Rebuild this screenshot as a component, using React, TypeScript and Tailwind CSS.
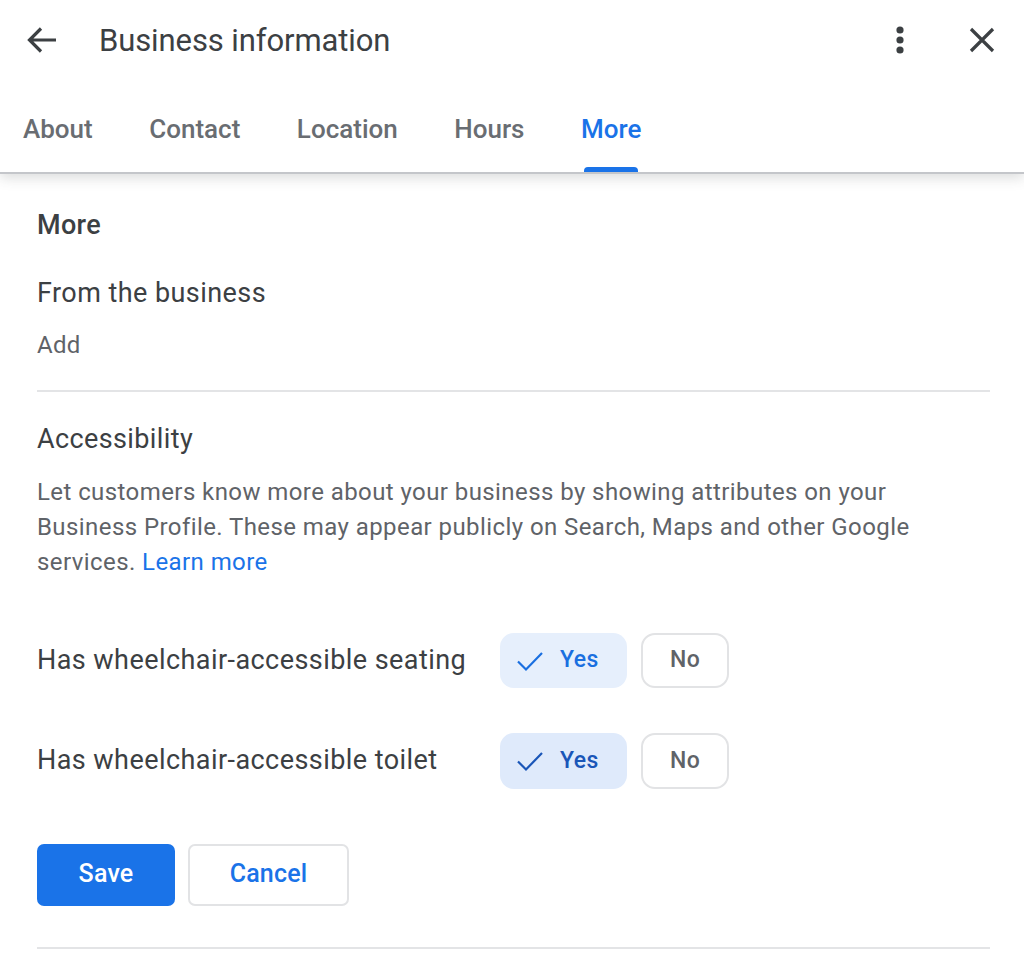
import React from "react";

const F = "font-['Roboto',sans-serif]";

function Check({ color }: { color: string }) {
  return (
    <svg width="28" height="22" viewBox="0 0 28 22" fill="none" className="block">
      <path d="M2 11.5 L10 19.5 L26 3" stroke={color} strokeWidth="2.2" />
    </svg>
  );
}

function Row({ label, dark, h, mb }: { label: string; dark?: boolean; h: string; mb: string }) {
  return (
    <div className={`flex items-center ${mb}`}>
      <div className="w-[463px] pb-[2px] text-[27px] tracking-[0.44px] leading-[34px] text-[#3c4043]">{label}</div>
      <div className={`flex gap-[14px] ${h}`}>
        <div className={`w-[127px] rounded-[14px] flex items-center pl-[16px] gap-[16px] ${dark ? "bg-[#dfeafb] text-[#1a56b8]" : "bg-[#e6effc] text-[#1a6fe0]"}`}>
          <Check color={dark ? "#1a56b8" : "#1a6fe0"} />
          <span className="text-[23px] font-medium tracking-[0.4px]">Yes</span>
        </div>
        <div className="w-[88px] rounded-[14px] border-2 border-[#e2e3e5] bg-white flex items-center justify-center text-[23px] font-medium tracking-[0.3px] text-[#5f6368]">
          No
        </div>
      </div>
    </div>
  );
}

export default function App() {
  return (
    <div className={`${F} w-[1024px] h-[975px] bg-white overflow-hidden`}>
      <header className="h-[174px] border-b-2 border-[#c4c6ca] shadow-[0_4px_12px_rgba(60,64,67,0.18)] relative bg-white flex flex-col">
        <div className="h-[80px] flex items-center pl-[26px] pr-[29px]">
          <svg width="32" height="28" viewBox="0 0 32 28" fill="none" className="block">
            <path d="M30 14 H4 M15 2.5 L3.5 14 L15 25.5" stroke="#3c4043" strokeWidth="3.2" />
          </svg>
          <div className="ml-[41px] pt-[2px] text-[31px] tracking-[-0.1px] text-[#3c4043]">Business information</div>
          <div className="ml-auto flex items-center gap-[63px]">
            <svg width="12" height="28" viewBox="0 0 12 28" className="block">
              <circle cx="6" cy="4" r="3.6" fill="#3c4043" />
              <circle cx="6" cy="14" r="3.6" fill="#3c4043" />
              <circle cx="6" cy="24" r="3.6" fill="#3c4043" />
            </svg>
            <svg width="26" height="26" viewBox="0 0 26 26" fill="none" className="block">
              <path d="M2 2 L24 24 M24 2 L2 24" stroke="#3c4043" strokeWidth="3.2" />
            </svg>
          </div>
        </div>
        <nav className="flex flex-1 pl-[23px] gap-[56.5px] text-[26px] font-medium text-[#696d72]">
          <div className="pt-[30px]">About</div>
          <div className="pt-[30px]">Contact</div>
          <div className="pt-[30px]">Location</div>
          <div className="pt-[30px]">Hours</div>
          <div className="pt-[30px] relative text-[#1a73e8]">
            More
            <span className="absolute left-[3px] right-[3px] bottom-0 h-[5px] rounded-t-[4px] bg-[#1a73e8]" />
          </div>
        </nav>
      </header>

      <main className="pl-[37px] w-[990px]">
        <h2 className="mt-[36px] text-[27px] leading-[30px] font-medium tracking-[0.3px] text-[#3c4043]">More</h2>
        <div className="mt-[36px] text-[27px] leading-[34px] tracking-[0.44px] text-[#3c4043]">From the business</div>
        <div className="mt-[19px] text-[24px] leading-[32px] tracking-[0.3px] text-[#5f6368]">Add</div>
        <div className="mt-[29px] h-[2px] bg-[#e3e4e6]" />
        <div className="mt-[30px] text-[27px] leading-[34px] tracking-[0.38px] text-[#3c4043]">Accessibility</div>
        <p className="mt-[19px] text-[24px] leading-[35px] tracking-[0.42px] text-[#5f6368] w-[900px]">
          Let customers know more about your business by showing attributes on your Business Profile. These may appear publicly on Search, Maps and other Google services. <span className="text-[#1a73e8]">Learn more</span>
        </p>
        <div className="mt-[53px]">
          <Row label="Has wheelchair-accessible seating" h="h-[55px]" mb="mb-[45px]" />
          <Row label="Has wheelchair-accessible toilet" dark h="h-[56px]" mb="mb-[55px]" />
        </div>
        <div className="flex gap-[13px] h-[62px]">
          <div className="w-[138px] rounded-[7px] bg-[#1a73e8] text-white flex items-center justify-center text-[25px] font-medium tracking-[0.2px] pb-[2px]">Save</div>
          <div className="w-[161px] rounded-[7px] border-2 border-[#e2e3e5] bg-white text-[#1a73e8] flex items-center justify-center text-[25px] font-medium tracking-[0.2px] pb-[2px]">Cancel</div>
        </div>
        <div className="mt-[41px] h-[2px] bg-[#e3e4e6]" />
      </main>
    </div>
  );
}
